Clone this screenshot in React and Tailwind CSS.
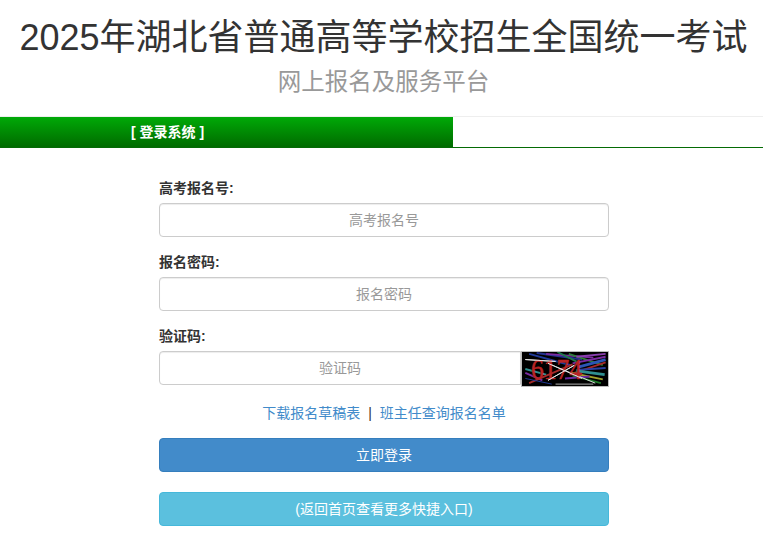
const FONT = "font-['Liberation_Sans','Noto_Sans_CJK_SC',sans-serif]";

// noise lines of the captcha: [x1, y1, x2, y2, colour, width]
const NOISE = [
  [6, 2, 50, 14, "#1f3a9a", 2],
  [14, 1, 62, 8, "#23318f", 2],
  [24, 2, 74, 6, "#7a2aa0", 2],
  [36, 0, 60, 12, "#1f7a4a", 2],
  [48, 2, 84, 14, "#2f7f3a", 2],
  [56, 5, 87, 2, "#8a3fb0", 2],
  [52, 12, 87, 5, "#7a2aa0", 2],
  [58, 16, 87, 8, "#2a55b5", 3],
  [54, 22, 87, 11, "#a52a2a", 2],
  [56, 19, 87, 17, "#2a3fa0", 2],
  [56, 20, 86, 24, "#2f8f8f", 3],
  [50, 22, 84, 29, "#a0a02a", 2],
  [52, 25, 82, 33, "#1f7a2a", 2],
  [44, 28, 70, 26, "#6a2aa0", 2],
  [2, 18, 24, 24, "#2f8f8f", 2],
  [2, 22, 20, 30, "#7a2aa0", 2],
  [6, 33, 52, 13, "#a52a2a", 2],
  [2, 28, 30, 34, "#1f3a9a", 1],
  [2, 8, 34, 10, "#e5e5e5", 1],
  [26, 12, 76, 33, "#e5e5e5", 1],
  [26, 30, 54, 14, "#e5e5e5", 1],
  [34, 34, 74, 34, "#bbbbbb", 1],
];

function Field({ label, placeholder, type = "text" }) {
  return (
    <div className="mb-[15px]">
      <label className="mb-[5px] block text-sm leading-5 font-bold">{label}</label>
      <input
        type={type}
        placeholder={placeholder}
        className="block h-[34px] w-full rounded border border-[#ccc] bg-white px-3 text-center text-sm text-[#555] shadow-[inset_0_1px_1px_rgba(0,0,0,0.075)] outline-none placeholder:text-[#999]"
      />
    </div>
  );
}

// captcha is an image in the original, so it gets drawn
function Captcha() {
  return (
    <svg viewBox="0 0 88 36" className="h-[36px] w-[88px] shrink-0 self-start border border-[#bbb] bg-black">
      <rect width="88" height="36" fill="#000" />
      {NOISE.map(([x1, y1, x2, y2, color, w], i) => (
        <line key={i} x1={x1} y1={y1} x2={x2} y2={y2} stroke={color} strokeWidth={w} />
      ))}
      <text x="8" y="29" fontSize="32" fontFamily="Liberation Serif" fill="#b82424" stroke="#b82424" strokeWidth="0.6" textLength="54" lengthAdjust="spacingAndGlyphs">6174</text>
      <line x1="2" y1="8" x2="34" y2="10" stroke="#e5e5e5" strokeWidth="1" />
      <line x1="26" y1="12" x2="62" y2="28" stroke="#e5e5e5" strokeWidth="1" />
      <line x1="26" y1="30" x2="54" y2="14" stroke="#e5e5e5" strokeWidth="1" />
    </svg>
  );
}

export default function App() {
  return (
    <div className={`${FONT} min-h-[539px] bg-white text-sm text-[#333]`}>
      <header className="pt-[18px] pb-[21px] pl-[4px] text-center">
        <h1 className="text-[36px] leading-10 font-normal">2025年湖北省普通高等学校招生全国统一考试</h1>
        <h2 className="mt-[11px] text-[23.5px] leading-[26px] font-normal text-[#999]">网上报名及服务平台</h2>
      </header>

      <div className="h-[32px] border-t border-b border-t-[#eee] border-b-[#056b05]">
        <div className="h-[30px] w-[453px] bg-gradient-to-b from-[#00aa08] to-[#006b00] pl-[131px] text-sm leading-[30px] font-bold text-white">
          [ 登录系统 ]
        </div>
      </div>

      <div className="pl-[5px]">
        <form className="mx-auto mt-[30px] w-[450px]">
          <Field label="高考报名号:" placeholder="高考报名号" />
          <Field label="报名密码:" placeholder="报名密码" type="password" />

          <div className="mb-[18px]">
            <label className="mb-[5px] block text-sm leading-5 font-bold">验证码:</label>
            <div className="flex h-[34px]">
              <input
                type="text"
                placeholder="验证码"
                className="block h-[34px] min-w-0 flex-1 rounded-l border border-[#ccc] bg-white px-3 text-center text-sm shadow-[inset_0_1px_1px_rgba(0,0,0,0.075)] outline-none placeholder:text-[#999]"
              />
              <Captcha />
            </div>
          </div>

          <p className="mb-[15px] text-center leading-5">
            <a href="#" className="text-[#428bca]">下载报名草稿表</a>
            <span className="mx-2">|</span>
            <a href="#" className="text-[#428bca]">班主任查询报名名单</a>
          </p>

          <button type="button" className="block h-[34px] w-full rounded border border-[#357ebd] bg-[#428bca] text-sm text-white">
            立即登录
          </button>
          <button type="button" className="mt-[20px] block h-[34px] w-full rounded border border-[#46b8da] bg-[#5bc0de] text-sm text-white">
            (返回首页查看更多快捷入口)
          </button>
        </form>
      </div>
    </div>
  );
}
